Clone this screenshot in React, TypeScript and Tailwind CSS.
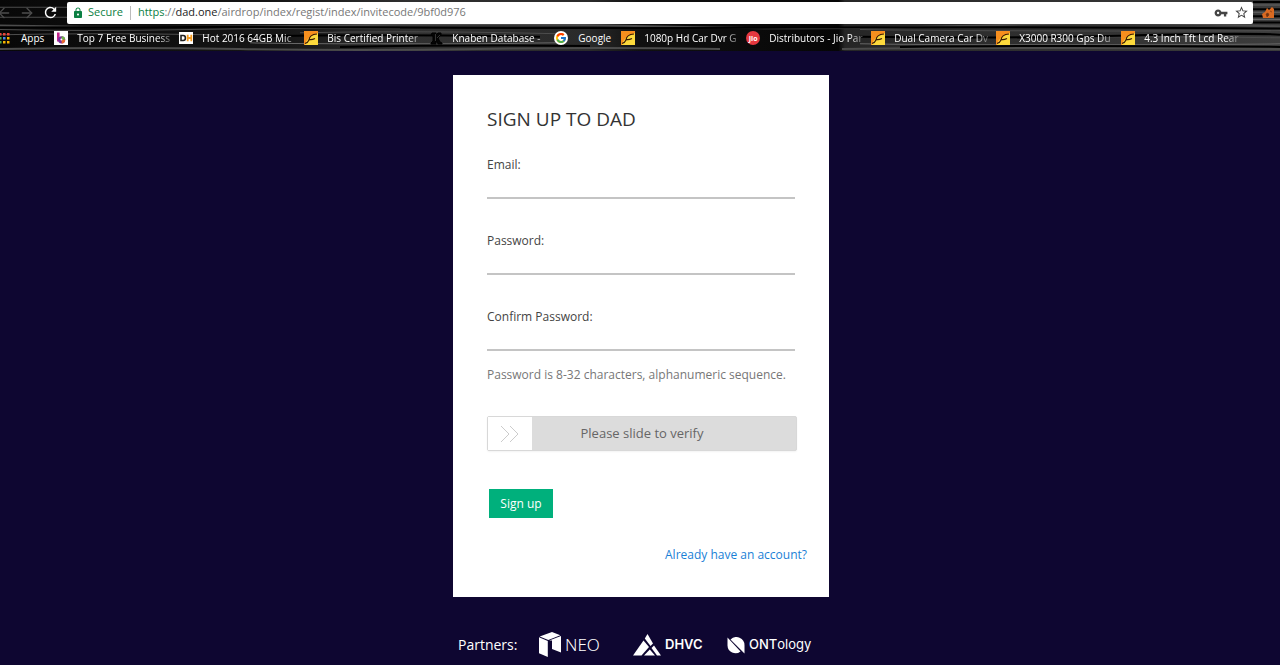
import React, { useState } from 'react';
import { ArrowLeft, ArrowRight } from 'lucide-react';
import { MdLock, MdRefresh, MdStarBorder, MdVpnKey } from 'react-icons/md';
import { FcGoogle } from 'react-icons/fc';

type BookmarkIcon = 'business' | 'dh' | 'seller' | 'knaben' | 'google' | 'jio';

interface Bookmark {
  icon: BookmarkIcon;
  title: string;
  short?: boolean;
}

const bookmarks: Bookmark[] = [
  { icon: 'business', title: 'Top 7 Free Business' },
  { icon: 'dh', title: 'Hot 2016 64GB Mic' },
  { icon: 'seller', title: 'Bis Certified Printer' },
  { icon: 'knaben', title: 'Knaben Database -' },
  { icon: 'google', title: 'Google', short: true },
  { icon: 'seller', title: '1080p Hd Car Dvr G' },
  { icon: 'jio', title: 'Distributors - Jio Par' },
  { icon: 'seller', title: 'Dual Camera Car Dv' },
  { icon: 'seller', title: 'X3000 R300 Gps Du' },
  { icon: 'seller', title: '4.3 Inch Tft Lcd Rear' },
];

const appColors = ['#e8453c', '#e8453c', '#e8453c', '#4cae50', '#4a86e8', '#f5b400', '#4cae50', '#f5b400', '#f5b400'];

const AppsIcon = () => (
  <svg viewBox="0 0 10 12" className="h-3 w-[10px] shrink-0">
    {appColors.map((color, i) => (
      <rect key={i} x={(i % 3) * 4 - 1} y={Math.floor(i / 3) * 4 + 1} width="2.5" height="2.5" fill={color} />
    ))}
  </svg>
);

const Favicon = ({ icon }: { icon: BookmarkIcon }) => {
  switch (icon) {
    case 'business':
      return (
        <svg viewBox="0 0 14 14" className="size-[14px] shrink-0">
          <rect width="14" height="14" fill="#fff" />
          <path d="M3 1.500h2.600v9H3z" fill="#c2268b" />
          <circle cx="7.6" cy="8.8" r="3.600" fill="#7b2fa0" />
          <path d="M7.600 5.200a3.600 3.600 0 0 1 3.600 3.600H7.600z" fill="#6cb544" />
          <path d="M11.200 8.800a3.600 3.600 0 0 1-3.600 3.600V8.800z" fill="#ec6a2c" />
          <circle cx="7.400" cy="8.600" r="1" fill="#fff" />
        </svg>
      );
    case 'dh':
      return (
        <svg viewBox="0 0 14 14" className="size-[14px] shrink-0">
          <rect y="1" width="14" height="12" fill="#fff" />
          <path d="M2 4.500h2.200q2.200 0 2.200 2.500T4.200 9.500H2z" fill="none" stroke="#222" strokeWidth="1.600" />
          <path d="M8.700 3.700v6.600M12.300 3.700v6.600M8.700 7h3.600" stroke="#f39a1e" strokeWidth="1.800" />
        </svg>
      );
    case 'seller':
      return (
        <svg viewBox="0 0 14 14" className="size-[14px] shrink-0">
          <rect width="14" height="14" fill="#f78f1e" />
          <path d="M14 2v12H1q1-8 13-12z" fill="#fcd93c" />
          <path d="M1 12.500q3-1 4-3.500.5-5.500 8-6M5 8.500q3 .5 6-1" fill="none" stroke="#3b1a05" strokeWidth="1.200" />
        </svg>
      );
    case 'knaben':
      return (
        <svg viewBox="0 0 14 14" className="size-[14px] shrink-0">
          <path d="M3 2h4v2l2-2h3v2L9 7l2 4 2 1v1H9L7 9v4H2v-1l2-2V5L2 4z" fill="#050505" stroke="#000" />
          <path d="M6.500 3v7M8 7l3-3" stroke="#555" strokeWidth=".6" />
        </svg>
      );
    case 'google':
      return (
        <span className="flex size-[14px] shrink-0 items-center justify-center rounded-full bg-white">
          <FcGoogle className="size-3" />
        </span>
      );
    case 'jio':
      return (
        <span className="flex size-[14px] shrink-0 items-center justify-center rounded-full bg-[#e5383f] text-[7px] leading-none font-bold text-white">
          Jio
        </span>
      );
  }
};

// Dark wood strands behind the browser toolbar
const ToolbarTexture = () => (
  <svg viewBox="0 0 1280 50" preserveAspectRatio="none" className="absolute inset-0 h-full w-full" aria-hidden="true">
    <defs>
      <linearGradient id="grain">
        <stop offset="0" stopColor="#080808" />
        <stop offset=".22" stopColor="#161616" />
        <stop offset=".32" stopColor="#303030" />
        <stop offset=".46" stopColor="#2a2a2a" />
        <stop offset=".5" stopColor="#101010" />
        <stop offset=".655" stopColor="#060606" />
        <stop offset=".66" stopColor="#262626" />
        <stop offset="1" stopColor="#3c3c3c" />
      </linearGradient>
    </defs>
    <rect width="1280" height="50" fill="url(#grain)" />
    <g fill="none" stroke="#4c4c4c">
      <path d="M0 25Q160 28 330 25T660 26T980 25T1280 26" strokeWidth="2" />
      <path d="M0 48Q120 46 240 48T480 48T720 48M842 48Q1040 46 1280 48" strokeWidth="2" />
      <path d="M0 7h67M0 17h67M0 29Q90 31 190 29T400 28M860 29Q1000 31 1280 30" />
      <path d="M250 42Q420 44 560 42M860 43Q1010 45 1280 43M1253 5h27M1253 12h27M1253 19h27" stroke="#666" />
      <path d="M0 34Q100 32 210 34M300 32Q430 30 560 33M980 37Q1120 35 1280 37" />
    </g>
    <g fill="none" stroke="#000" strokeWidth="2">
      <path d="M0 27Q200 26 400 27T800 27T1280 28" />
      <path d="M230 36Q380 33 540 36M340 46Q450 44 590 45M860 36Q1000 38 1120 35T1280 34" />
      <path d="M1253 2h27M1253 9h27M1253 16h27M1253 22h27M900 46Q1060 44 1280 46" />
    </g>
  </svg>
);

const BrowserBar = () => (
  <header className="relative bg-[#111] text-white">
    <ToolbarTexture />
    <div className="relative flex h-[25px] items-center">
      <div className="flex w-[67px] shrink-0 items-center gap-[7px]">
        <button type="button" aria-label="Back" className="-ml-1 text-[#4d4d4d]">
          <ArrowLeft className="size-4" strokeWidth={2} />
        </button>
        <button type="button" aria-label="Forward" className="text-[#4d4d4d]">
          <ArrowRight className="size-4" strokeWidth={2} />
        </button>
        <button type="button" aria-label="Reload">
          <MdRefresh className="size-[17px]" />
        </button>
      </div>
      <div className="flex h-[22px] min-w-0 flex-1 items-center rounded-xs bg-white px-1 text-[11px]">
        <MdLock className="ml-px size-3 shrink-0 text-[#0b8043]" />
        <span className="ml-1 text-[#0b8043]">Secure</span>
        <span className="mx-[7px] h-[14px] w-px bg-[#bbb]" />
        <span className="flex-1 truncate text-[#777]">
          <span className="text-[#0b8043]">https</span>://<span className="text-[#222]">dad.one</span>
          /airdrop/index/regist/index/invitecode/9bf0d976
        </span>
        <MdVpnKey className="size-[14px] shrink-0 text-[#444]" />
        <button type="button" aria-label="Bookmark this page" className="ml-1.5 text-[#444]">
          <MdStarBorder className="size-[15px]" />
        </button>
      </div>
      <div className="flex w-[27px] shrink-0 justify-center">
        <svg viewBox="0 0 18 14" className="h-[14px] w-[18px]">
          <path d="M5 12 4 8l3-2 2-4 2 2 3-3 2 2v9z" fill="#d96a22" />
          <path d="m8 8 2-1 1 2-2 2zM12 5l2 1" fill="#6f3210" stroke="#6f3210" strokeWidth=".6" />
        </svg>
      </div>
    </div>
    <nav className="relative flex h-[26px] items-center overflow-hidden text-[10px] whitespace-nowrap">
      <a href="#" className="mr-[10px] flex items-center gap-[11px]">
        <AppsIcon />
        Apps
      </a>
      {bookmarks.map((b, i) => (
        <a key={i} href="#" className={b.short ? 'mr-[10px] flex shrink-0 items-center gap-[10px]' : 'mr-0.5 flex shrink-0 items-center gap-[9px]'}>
          <Favicon icon={b.icon} />
          {b.short ? <span>{b.title}</span> : <span className="w-[100px] mask-r-from-80% mask-r-to-100%">{b.title}</span>}
        </a>
      ))}
    </nav>
  </header>
);

interface FieldProps {
  id: string;
  label: string;
  type: string;
}

const Field = ({ id, label, type }: FieldProps) => (
  <div className="flex flex-col">
    <label htmlFor={id} className="text-xs leading-5 text-[#444]">
      {label}
    </label>
    <input id={id} type={type} className="h-6 border-b-2 border-[#c4c4c4] text-xs text-[#333] outline-none focus:border-[#00b07c]" />
  </div>
);

const SlideVerify = () => {
  const [value, setValue] = useState(0);

  return (
    <div className="relative -mr-0.5 flex h-[35px] items-center rounded-xs border border-[#d8d8d8] bg-[#dcdcdc] shadow-xs">
      <div className="flex h-full w-11 shrink-0 items-center justify-center bg-white">
        <svg viewBox="0 0 20 18" className="h-[18px] w-5" fill="none" stroke="#ccc">
          <path d="m1 1 8 8-8 8M10 1l8 8-8 8" />
        </svg>
      </div>
      <label htmlFor="verify" className="flex-1 pr-11 text-center text-[13px] text-[#666]">
        Please slide to verify
      </label>
      <input
        id="verify"
        type="range"
        min={0}
        max={100}
        value={value}
        onChange={e => setValue(Number(e.target.value))}
        className="absolute inset-0 h-full w-full cursor-pointer opacity-0"
      />
    </div>
  );
};

const NeoLogo = () => (
  <svg viewBox="0 0 22 26" className="h-[26px] w-[22px]" fill="#fff">
    <path d="M0 5.200 8.800 9v16L0 21.300z" />
    <path d="M.7 4.400 13 0l8.300 3.200L9.300 7.900z" />
    <path d="M10.200 8.500 22 4v16.500l-9-3.600V8.500z" />
  </svg>
);

const DhvcLogo = () => (
  <svg viewBox="0 0 28 22" className="h-[22px] w-7" fill="#fff">
    <path d="M10.500 6.500 16 13 8.500 21.500H0z" />
    <path d="M14.500 0 20 9.500l-2.500 2.500-5.700-7.500z" />
    <path d="m21 11.500 7 10h-4L18.500 14z" />
    <path d="m16.800 15.500 5.200 6H11z" />
  </svg>
);

const OntologyLogo = () => (
  <svg viewBox="0 0 18 17" className="h-[17px] w-[18px]" fill="#fff">
    <path d="M.5.5v8a8 8 0 0 0 13 6z" />
    <path d="M3.500 2.500a8.200 8.200 0 0 1 14 6v8z" />
  </svg>
);

const Partners = () => (
  <footer className="mt-[34px] flex h-7 w-[376px] items-center pl-[5px] text-white">
    <span className="w-[81px] text-sm">Partners:</span>
    <a href="#" className="flex w-[94px] items-center gap-1 font-['Noto_Sans',sans-serif] text-[17px] font-light">
      <NeoLogo />
      NEO
    </a>
    <a href="#" className="flex w-[94px] items-center gap-1 font-['Inter',sans-serif] text-[13px] font-semibold">
      <DhvcLogo />
      DHVC
    </a>
    <a href="#" className="flex items-center gap-1 font-['Inter',sans-serif] text-[13px] font-medium">
      <OntologyLogo />
      <span>
        ONT<span className="font-normal">ology</span>
      </span>
    </a>
  </footer>
);

export default function App() {
  return (
    <div className="flex min-h-screen flex-col bg-[#0e0631] font-['Open_Sans',sans-serif]">
      <BrowserBar />
      <main className="flex flex-1 flex-col items-center pt-6 pl-0.5">
        <form onSubmit={e => e.preventDefault()} className="flex w-[376px] flex-col bg-white px-[34px] pt-[30px] pb-8">
          <h1 className="text-[19px] leading-7 text-[#333]">SIGN UP TO DAD</h1>
          <div className="mt-[22px] flex flex-col gap-8">
            <Field id="email" label="Email:" type="email" />
            <Field id="password" label="Password:" type="password" />
            <Field id="confirm" label="Confirm Password:" type="password" />
          </div>
          <p className="mt-[14px] mb-[31px] text-xs leading-5 text-[#777]">Password is 8-32 characters, alphanumeric sequence.</p>
          <SlideVerify />
          <button type="submit" className="mt-[38px] ml-0.5 h-[29px] w-16 bg-[#00b07c] text-xs text-white">
            Sign up
          </button>
          <a href="#" className="mt-[27px] -mr-3 self-end text-xs leading-5 text-[#1a7fd6]">
            Already have an account?
          </a>
        </form>
        <Partners />
      </main>
    </div>
  );
}
